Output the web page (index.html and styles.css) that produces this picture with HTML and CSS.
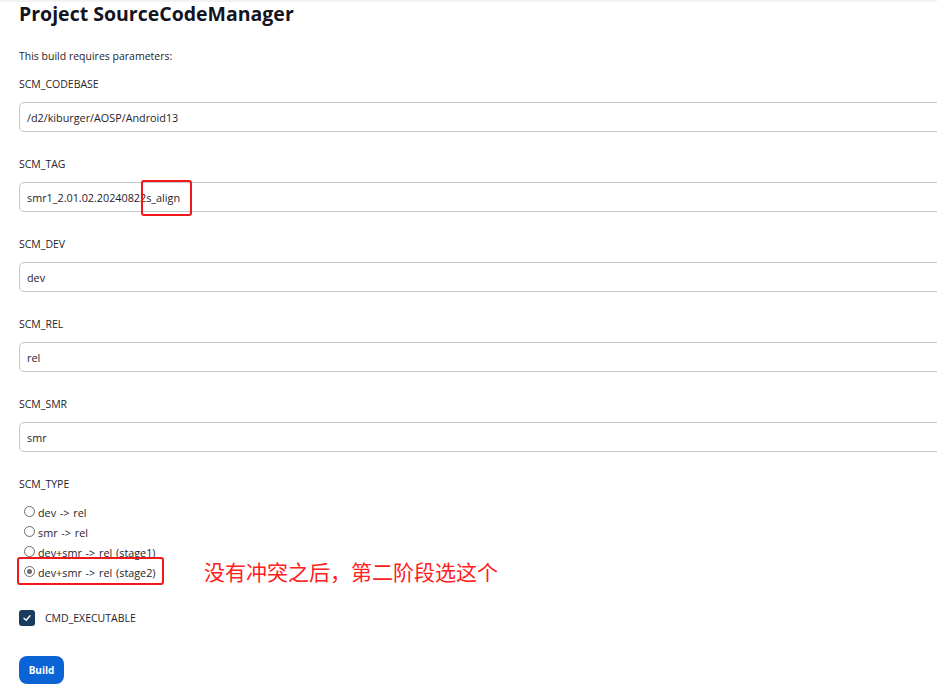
FILE: index.html
```html
<!DOCTYPE html>
<html lang="zh">
<head>
<meta charset="utf-8">
<link rel="stylesheet" href="styles.css">
</head>
<body>
<div class="topstrip"></div>
<main class="page">
  <h1 class="title">Project SourceCodeManager</h1>
  <p class="desc">This build requires parameters:</p>

  <div class="params">
    <div class="param">
      <div class="label">SCM_CODEBASE</div>
      <div class="input">/d2/kiburger/AOSP/Android13</div>
    </div>
    <div class="param">
      <div class="label">SCM_TAG</div>
      <div class="input">smr1_2.01.02.20240822s_align</div>
    </div>
    <div class="param">
      <div class="label">SCM_DEV</div>
      <div class="input">dev</div>
    </div>
    <div class="param">
      <div class="label">SCM_REL</div>
      <div class="input">rel</div>
    </div>
    <div class="param">
      <div class="label">SCM_SMR</div>
      <div class="input">smr</div>
    </div>
    <div class="param">
      <div class="label">SCM_TYPE</div>
      <div class="radios">
        <div class="radio-row"><span class="radio"></span><span>dev -&gt; rel</span></div>
        <div class="radio-row"><span class="radio"></span><span>smr -&gt; rel</span></div>
        <div class="radio-row"><span class="radio"></span><span>dev+smr -&gt; rel (stage1)</span></div>
        <div class="radio-row"><span class="radio checked"></span><span>dev+smr -&gt; rel (stage2)</span></div>
      </div>
    </div>
  </div>
  <div class="check-row">
    <span class="checkbox"><svg width="10" height="10" viewBox="0 0 10 10"><path d="M2 5.2 L4.2 7.2 L8 2.8" fill="none" stroke="#fff" stroke-width="1.4" stroke-linecap="round" stroke-linejoin="round"/></svg></span>
    <span>CMD_EXECUTABLE</span>
  </div>
  <button class="build">Build</button>
</main>
<div class="mark mark-tag"></div>
<div class="mark mark-stage"></div>
<div class="note">没有冲突之后，第二阶段选这个</div>
</body>
</html>
```
FILE: styles.css
```css
html, body {
  margin: 0;
  padding: 0;
  background: #fff;
  overflow: hidden;
}
body {
  position: relative;
  width: 937px;
  height: 698px;
  font-family: "Open Sans", "Noto Sans", sans-serif;
  font-size: 10.5px;
  color: #1f2329;
}
.topstrip {
  height: 2px;
  background: #f3f3f3;
}
.page {
  padding-left: 19px;
  display: flex;
  flex-direction: column;
  align-items: flex-start;
}
.title {
  margin: -2px 0 0;
  font-size: 19.5px;
  line-height: 28px;
  font-weight: 700;
  color: #14141f;
}
.desc {
  margin: 20px 0 0;
  line-height: 16px;
}
.params {
  margin-top: 12px;
  display: flex;
  flex-direction: column;
  gap: 24px;
}
.label {
  line-height: 16px;
}
.input {
  margin-top: 10px;
  width: 960px;
  height: 30px;
  box-sizing: border-box;
  border: 1px solid #c3cacd;
  border-radius: 5px;
  padding-left: 7px;
  display: flex;
  align-items: center;
  font-size: 10.8px;
}
.radios {
  margin-top: 10px;
  display: flex;
  flex-direction: column;
}
.radio-row {
  height: 20px;
  display: flex;
  align-items: center;
  gap: 3px;
  padding-left: 5px;
  font-size: 10.8px;
  word-spacing: 1px;
}
.radio {
  width: 9px;
  height: 9px;
  border: 1px solid #6b6b6b;
  border-radius: 50%;
  position: relative;
  top: -1px;
}
.radio.checked::after {
  content: "";
  position: absolute;
  left: 2px;
  top: 2px;
  width: 5px;
  height: 5px;
  border-radius: 50%;
  background: #6b6b6b;
}
.check-row {
  margin-top: 26px;
  height: 20px;
  display: flex;
  align-items: center;
  gap: 10px;
}
.checkbox {
  width: 16px;
  height: 16px;
  border-radius: 3px;
  background: #193b5c;
  display: flex;
  align-items: center;
  justify-content: center;
}
.build {
  margin-top: 28px;
  width: 45px;
  height: 28px;
  border: none;
  border-radius: 8px;
  background: #0b64d6;
  color: #fff;
  font-family: "Open Sans", "Noto Sans", sans-serif;
  font-weight: 700;
  font-size: 10px;
  padding: 0;
}
.mark {
  position: absolute;
  border: 2px solid #f01818;
  border-radius: 3px;
  box-sizing: border-box;
}
.mark-tag {
  left: 141px;
  top: 180px;
  width: 51px;
  height: 36px;
}
.mark-stage {
  left: 17px;
  top: 557px;
  width: 147px;
  height: 28px;
}
.note {
  position: absolute;
  left: 204px;
  top: 557px;
  font-family: "Noto Sans CJK SC", sans-serif;
  font-size: 21px;
  line-height: 28px;
  color: #ff2020;
}
```
